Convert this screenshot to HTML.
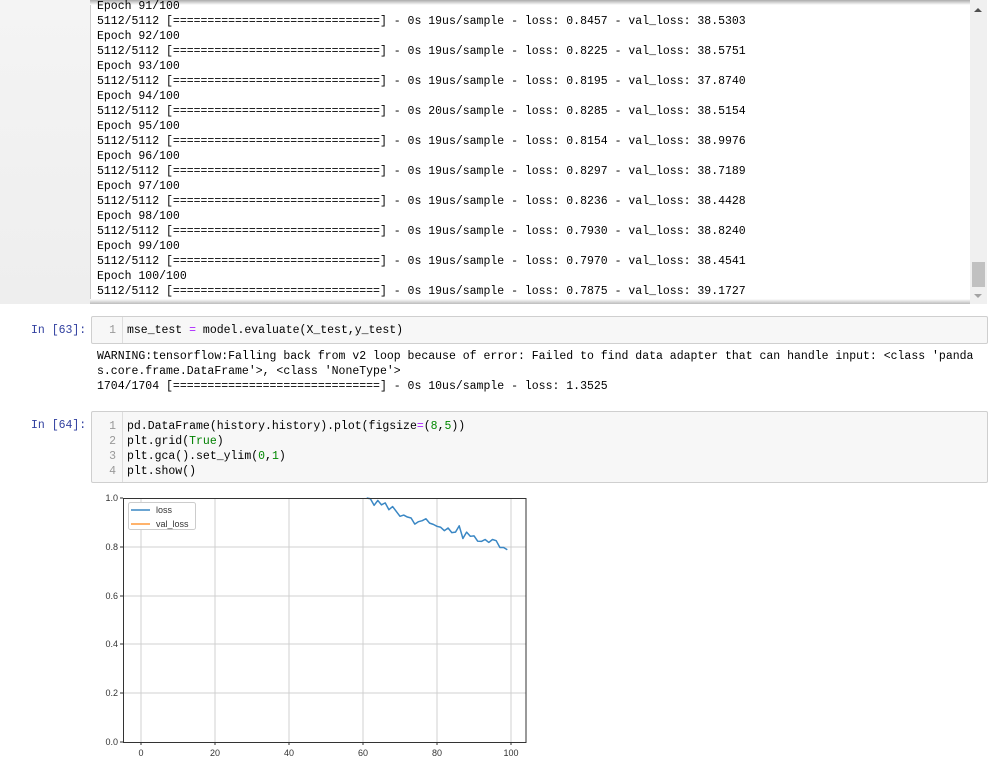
<!DOCTYPE html>
<html><head><meta charset="utf-8"><style>
body{margin:0;width:1001px;height:775px;background:#fff;position:relative;overflow:hidden;font-family:"Liberation Mono",monospace;font-size:11.5px;color:#000}
.abs{position:absolute}
pre{margin:0;font-family:"Liberation Mono",monospace;font-size:11.5px;line-height:15px;white-space:pre}
.prompt{color:#303f9f;font-size:11.5px}
.cell{position:absolute;left:91px;width:895px;background:#f7f7f7;border:1px solid #cfcfcf;border-radius:2px}
.ln{position:absolute;left:0;top:0;bottom:0;width:30px;border-right:1px solid #ddd;color:#999;text-align:right}
.ln pre{padding-right:6px}
.g{color:#008000}.n{color:#080}.o{color:#aa22ff}
</style></head><body>
<div class="abs" style="left:0;top:0;width:90px;height:304px;background:linear-gradient(#f4f4f4,#eeeeee);border-right:1px solid #ccc"></div>
<div class="abs" style="left:90px;top:0;width:880px;height:5px;background:linear-gradient(#aaa,#fff)"></div>
<div class="abs" style="left:90px;top:299px;width:880px;height:5px;background:linear-gradient(#fff,#bbb)"></div>
<div class="abs" style="left:970px;top:0;width:17px;height:304px;background:#f0f0f0"></div>
<div class="abs" style="left:972px;top:262px;width:13px;height:25px;background:#c1c1c1"></div>
<div class="abs" style="left:974px;top:8px;width:0;height:0;border-left:4px solid transparent;border-right:4px solid transparent;border-bottom:4px solid #505050"></div>
<div class="abs" style="left:974px;top:294px;width:0;height:0;border-left:4px solid transparent;border-right:4px solid transparent;border-top:4px solid #a3a3a3"></div>
<pre class="abs" style="left:97px;top:-1px">Epoch 91/100
5112/5112 [==============================] - 0s 19us/sample - loss: 0.8457 - val_loss: 38.5303
Epoch 92/100
5112/5112 [==============================] - 0s 19us/sample - loss: 0.8225 - val_loss: 38.5751
Epoch 93/100
5112/5112 [==============================] - 0s 19us/sample - loss: 0.8195 - val_loss: 37.8740
Epoch 94/100
5112/5112 [==============================] - 0s 20us/sample - loss: 0.8285 - val_loss: 38.5154
Epoch 95/100
5112/5112 [==============================] - 0s 19us/sample - loss: 0.8154 - val_loss: 38.9976
Epoch 96/100
5112/5112 [==============================] - 0s 19us/sample - loss: 0.8297 - val_loss: 38.7189
Epoch 97/100
5112/5112 [==============================] - 0s 19us/sample - loss: 0.8236 - val_loss: 38.4428
Epoch 98/100
5112/5112 [==============================] - 0s 19us/sample - loss: 0.7930 - val_loss: 38.8240
Epoch 99/100
5112/5112 [==============================] - 0s 19us/sample - loss: 0.7970 - val_loss: 38.4541
Epoch 100/100
5112/5112 [==============================] - 0s 19us/sample - loss: 0.7875 - val_loss: 39.1727</pre>

<pre class="abs prompt" style="left:31px;top:323px">In [63]:</pre>
<div class="cell" style="top:316px;height:26px"><div class="ln"><pre style="padding-top:6px">1</pre></div>
<pre class="abs" style="left:35px;top:6px">mse_test <span class="o">=</span> model.evaluate(X_test,y_test)</pre></div>
<pre class="abs" style="left:97px;top:349px">WARNING:tensorflow:Falling back from v2 loop because of error: Failed to find data adapter that can handle input: &lt;class 'panda
s.core.frame.DataFrame'&gt;, &lt;class 'NoneType'&gt;
1704/1704 [==============================] - 0s 10us/sample - loss: 1.3525</pre>

<pre class="abs prompt" style="left:31px;top:418px">In [64]:</pre>
<div class="cell" style="top:411px;height:70px"><div class="ln"><pre style="padding-top:7px">1
2
3
4</pre></div>
<pre class="abs" style="left:35px;top:7px">pd.DataFrame(history.history).plot(figsize<span class="o">=</span>(<span class="n">8</span>,<span class="n">5</span>))
plt.grid(<span class="g">True</span>)
plt.gca().set_ylim(<span class="n">0</span>,<span class="n">1</span>)
plt.show()</pre></div>

<svg class="abs" style="left:0;top:0" width="1001" height="775" font-family="Liberation Sans, sans-serif" font-size="9" fill="#333">
<g stroke="#d0d0d0" stroke-width="1">
<line x1="141" y1="498" x2="141" y2="742"/><line x1="215" y1="498" x2="215" y2="742"/><line x1="289" y1="498" x2="289" y2="742"/><line x1="363" y1="498" x2="363" y2="742"/><line x1="437" y1="498" x2="437" y2="742"/><line x1="511" y1="498" x2="511" y2="742"/>
<line x1="123" y1="547" x2="526" y2="547"/><line x1="123" y1="596" x2="526" y2="596"/><line x1="123" y1="644" x2="526" y2="644"/><line x1="123" y1="693" x2="526" y2="693"/>
</g>
<g transform="translate(141,742) scale(3.7,-244)">
<polyline fill="none" stroke="#3a87c4" stroke-width="1.5" vector-effect="non-scaling-stroke" stroke-linejoin="round" points="61,1.0 62,0.997 63,0.97 64,0.99 65,0.972 66,0.98 67,0.952 68,0.965 69,0.945 70,0.925 71,0.93 72,0.922 73,0.918 74,0.893 75,0.903 76,0.907 77,0.915 78,0.897 79,0.892 80,0.884 81,0.88 82,0.866 83,0.877 84,0.858 85,0.86 86,0.886 87,0.834 88,0.86 89,0.843 90,0.845 91,0.823 92,0.822 93,0.83 94,0.818 95,0.83 96,0.825 97,0.797 98,0.797 99,0.788"/>
</g>
<rect x="123.5" y="498.5" width="402.5" height="244" fill="none" stroke="#333" stroke-width="1"/>
<g stroke="#333"><line x1="141" y1="742" x2="141" y2="745"/><line x1="215" y1="742" x2="215" y2="745"/><line x1="289" y1="742" x2="289" y2="745"/><line x1="363" y1="742" x2="363" y2="745"/><line x1="437" y1="742" x2="437" y2="745"/><line x1="511" y1="742" x2="511" y2="745"/>
<line x1="120" y1="498" x2="123" y2="498"/><line x1="120" y1="547" x2="123" y2="547"/><line x1="120" y1="596" x2="123" y2="596"/><line x1="120" y1="644" x2="123" y2="644"/><line x1="120" y1="693" x2="123" y2="693"/><line x1="120" y1="742" x2="123" y2="742"/></g>
<g text-anchor="end"><text x="118" y="501">1.0</text><text x="118" y="550">0.8</text><text x="118" y="599">0.6</text><text x="118" y="647">0.4</text><text x="118" y="696">0.2</text><text x="118" y="745">0.0</text></g>
<g text-anchor="middle"><text x="141" y="756">0</text><text x="215" y="756">20</text><text x="289" y="756">40</text><text x="363" y="756">60</text><text x="437" y="756">80</text><text x="511" y="756">100</text></g>
<rect x="128.5" y="502.5" width="67" height="27" rx="2" fill="#fff" stroke="#ccc"/>
<line x1="131" y1="510" x2="150" y2="510" stroke="#3a87c4" stroke-width="1.5"/>
<line x1="131" y1="524" x2="150" y2="524" stroke="#ff9a3c" stroke-width="1.5"/>
<text x="156" y="513">loss</text><text x="156" y="527">val_loss</text>
</svg>
</body></html>
